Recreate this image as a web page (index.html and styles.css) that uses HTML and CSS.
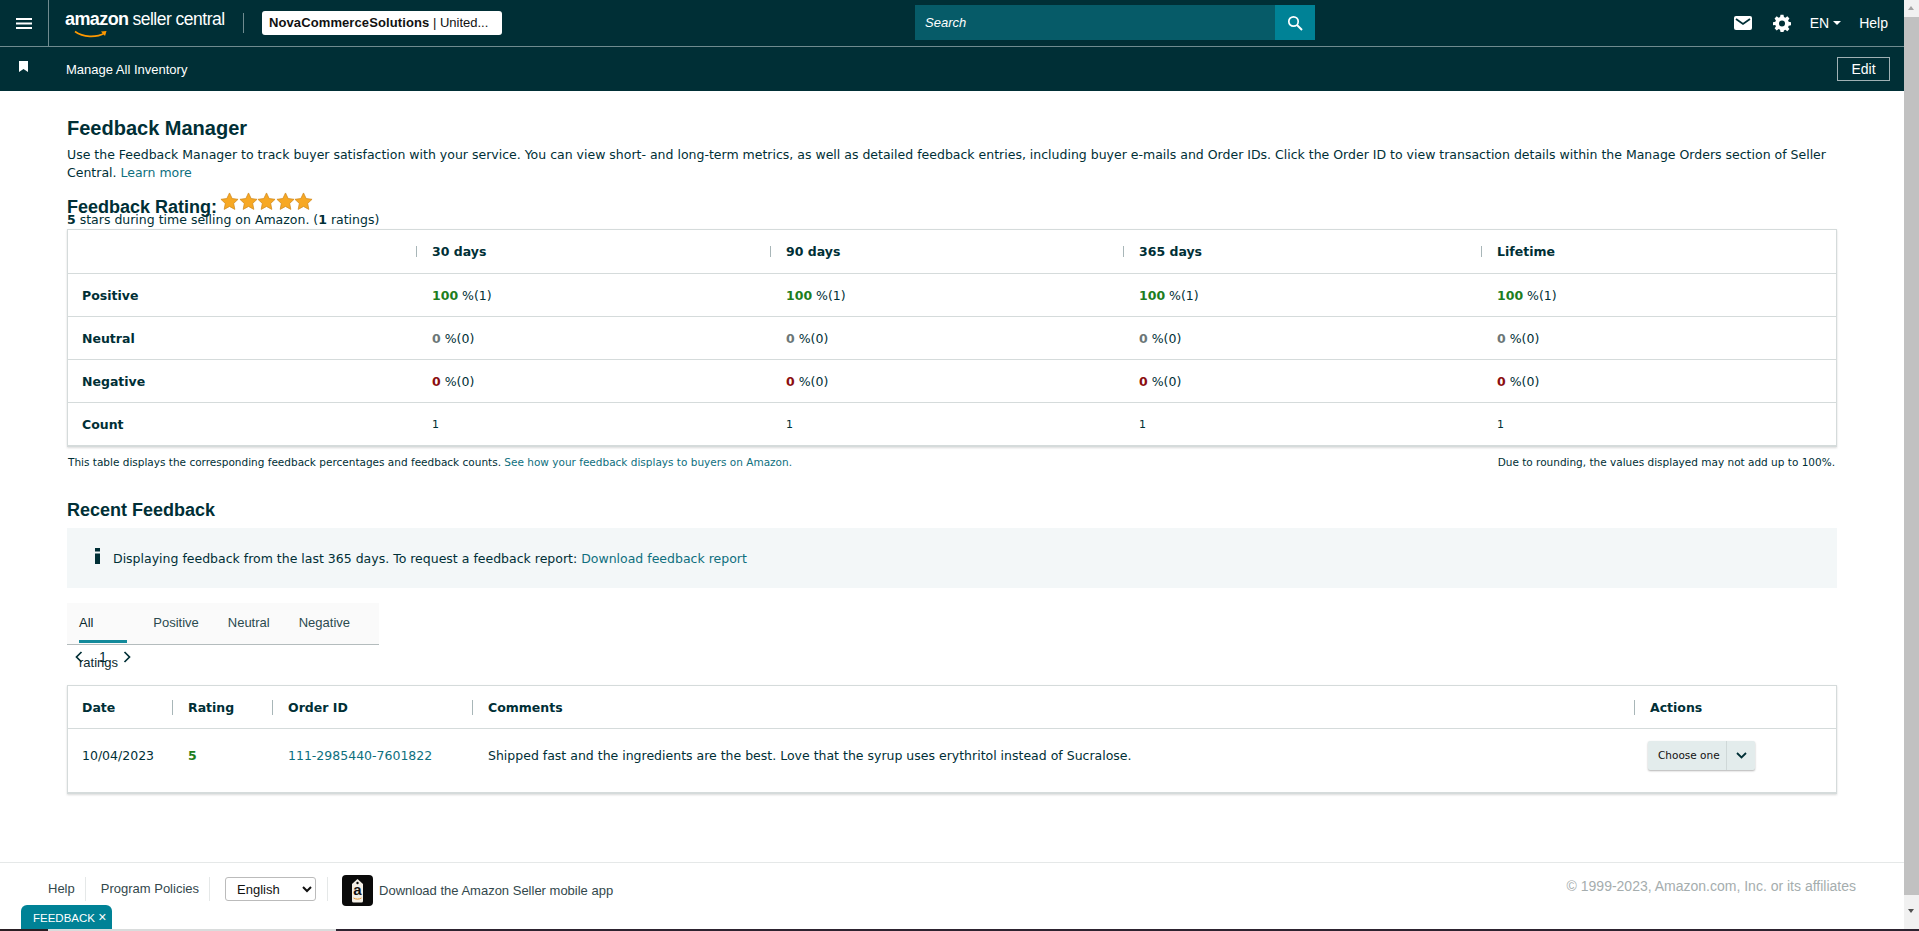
FILE: index.html
```html
<!DOCTYPE html>
<html lang="en">
<head>
<meta charset="utf-8">
<title>Feedback Manager</title>
<link rel="stylesheet" href="styles.css">
</head>
<body>
<div class="window">
  <div class="page">
    <header class="topbar">
      <button class="burger" aria-label="Menu">
        <svg width="16" height="11" viewBox="0 0 16 11"><path d="M0 0h16v2H0zM0 4.500h16v2H0zM0 9h16v2H0z" fill="#fff"/></svg>
      </button>
      <div class="logo">
        <span class="logo-amazon">amazon</span><span class="logo-seller">seller central</span>
        <svg class="logo-smile" width="34" height="9" viewBox="0 0 34 9"><path d="M1 1.500C9 7.500 22 8 31 3" fill="none" stroke="#f90" stroke-width="1.600"/><path d="M27 1.500l5.500-.5-1.500 5z" fill="#f90"/></svg>
      </div>
      <div class="account"><b>NovaCommerceSolutions</b> | United...</div>
      <div class="search">
        <span class="search-field">Search</span>
        <span class="search-btn">
          <svg width="16" height="16" viewBox="0 0 16 16"><circle cx="6.500" cy="6.500" r="4.700" fill="none" stroke="#fff" stroke-width="1.700"/><path d="M10 10l5 5" stroke="#fff" stroke-width="2"/></svg>
        </span>
      </div>
      <div class="top-actions">
        <svg class="mail" width="18" height="14" viewBox="0 0 18 14"><rect width="18" height="14" rx="2" fill="#fff"/><path d="M2 3l7 5 7-5" fill="none" stroke="#002f36" stroke-width="1.800"/></svg>
        <svg class="gear" width="18" height="18" viewBox="0 0 24 24"><path fill="#fff" fill-rule="evenodd" d="M10 1h4l.6 3.100 1.900.8L19.100 3.100 21.900 5.900 20.100 8.500l.8 1.900L24 11v4l-3.100.6-.8 1.900 1.800 2.600-2.800 2.800-2.600-1.800-1.900.8L14 24h-4l-.6-3.100-1.900-.8-2.600 1.800-2.800-2.800 1.800-2.600-.8-1.900L0 15v-4l3.100-.6.800-1.900L2.100 5.900 4.900 3.100 7.500 4.900l1.900-.8zM12 8.500a4 4 0 1 0 0 8 4 4 0 0 0 0-8z"/></svg>
        <span class="lang">EN<i class="caret"></i></span>
        <span class="help">Help</span>
      </div>
    </header>
    <nav class="subbar">
      <svg class="bookmark" width="9" height="11" viewBox="0 0 9 11"><path d="M0 0h9v11L4.500 8 0 11z" fill="#fff"/></svg>
      <span class="subbar-link">Manage All Inventory</span>
      <span class="edit">Edit</span>
    </nav>

    <main class="content">
      <h1 class="title">Feedback Manager</h1>
      <p class="intro">Use the Feedback Manager to track buyer satisfaction with your service. You can view short- and long-term metrics, as well as detailed feedback entries, including buyer e-mails and Order IDs. Click the Order ID to view transaction details within the Manage Orders section of Seller Central. <a class="link">Learn more</a></p>
      <div class="rating-head">
        <h2 class="rating-title">Feedback Rating:</h2>
        <div class="stars">
          <svg viewBox="0 0 20 20"><path class="star" d="M10 1l2.800 5.900 6.200.8-4.600 4.300 1.200 6.300L10 15.200l-5.600 3.100 1.200-6.300L1 7.700l6.200-.8z"/></svg>
          <svg viewBox="0 0 20 20"><path class="star" d="M10 1l2.800 5.900 6.200.8-4.600 4.300 1.200 6.300L10 15.200l-5.600 3.100 1.200-6.300L1 7.700l6.200-.8z"/></svg>
          <svg viewBox="0 0 20 20"><path class="star" d="M10 1l2.800 5.900 6.200.8-4.600 4.300 1.200 6.300L10 15.200l-5.600 3.100 1.200-6.300L1 7.700l6.200-.8z"/></svg>
          <svg viewBox="0 0 20 20"><path class="star" d="M10 1l2.800 5.900 6.200.8-4.600 4.300 1.200 6.300L10 15.200l-5.600 3.100 1.200-6.300L1 7.700l6.200-.8z"/></svg>
          <svg viewBox="0 0 20 20"><path class="star" d="M10 1l2.800 5.900 6.200.8-4.600 4.300 1.200 6.300L10 15.200l-5.600 3.100 1.200-6.300L1 7.700l6.200-.8z"/></svg>
        </div>
      </div>
      <p class="rating-sub"><b>5</b> stars during time selling on Amazon. (<b>1</b> ratings)</p>

      <section class="card metrics">
        <div class="row row-head">
          <div class="cell"></div>
          <div class="cell th">30 days</div>
          <div class="cell th">90 days</div>
          <div class="cell th">365 days</div>
          <div class="cell th">Lifetime</div>
        </div>
        <div class="row">
          <div class="cell label">Positive</div>
          <div class="cell val"><b class="pos">100</b> %(1)</div>
          <div class="cell val"><b class="pos">100</b> %(1)</div>
          <div class="cell val"><b class="pos">100</b> %(1)</div>
          <div class="cell val"><b class="pos">100</b> %(1)</div>
        </div>
        <div class="row">
          <div class="cell label">Neutral</div>
          <div class="cell val"><b class="neu">0</b> %(0)</div>
          <div class="cell val"><b class="neu">0</b> %(0)</div>
          <div class="cell val"><b class="neu">0</b> %(0)</div>
          <div class="cell val"><b class="neu">0</b> %(0)</div>
        </div>
        <div class="row">
          <div class="cell label">Negative</div>
          <div class="cell val"><b class="neg">0</b> %(0)</div>
          <div class="cell val"><b class="neg">0</b> %(0)</div>
          <div class="cell val"><b class="neg">0</b> %(0)</div>
          <div class="cell val"><b class="neg">0</b> %(0)</div>
        </div>
        <div class="row">
          <div class="cell label">Count</div>
          <div class="cell val small">1</div>
          <div class="cell val small">1</div>
          <div class="cell val small">1</div>
          <div class="cell val small">1</div>
        </div>
      </section>
      <div class="note">
        <span>This table displays the corresponding feedback percentages and feedback counts. <a class="link">See how your feedback displays to buyers on Amazon.</a></span>
        <span>Due to rounding, the values displayed may not add up to 100%.</span>
      </div>

      <h2 class="recent-title">Recent Feedback</h2>
      <div class="info">
        <svg class="info-i" width="5" height="16" viewBox="0 0 5 16"><path d="M0 0h5v3.500H0zM0 5.500h5V16H0z" fill="#002f36"/></svg>
        <span>Displaying feedback from the last 365 days. To request a feedback report: <a class="link">Download feedback report</a></span>
      </div>

      <div class="tabs">
        <span class="tab active">All ratings</span>
        <span class="tab">Positive</span>
        <span class="tab">Neutral</span>
        <span class="tab">Negative</span>
      </div>
      <div class="pager">
        <svg width="8" height="12" viewBox="0 0 8 12"><path d="M6.500 1L1.500 6l5 5" fill="none" stroke="#002f36" stroke-width="1.700"/></svg>
        <span>1</span>
        <svg width="8" height="12" viewBox="0 0 8 12"><path d="M1.500 1l5 5-5 5" fill="none" stroke="#002f36" stroke-width="1.700"/></svg>
      </div>

      <section class="card recent">
        <div class="rrow rrow-head">
          <div class="rcell first">Date</div>
          <div class="rcell th">Rating</div>
          <div class="rcell th">Order ID</div>
          <div class="rcell th">Comments</div>
          <div class="rcell th">Actions</div>
        </div>
        <div class="rrow rrow-body">
          <div class="rcell first plain">10/04/2023</div>
          <div class="rcell"><b class="pos">5</b></div>
          <div class="rcell"><a class="link">111-2985440-7601822</a></div>
          <div class="rcell">Shipped fast and the ingredients are the best. Love that the syrup uses erythritol instead of Sucralose.</div>
          <div class="rcell">
            <div class="choose"><span class="choose-label">Choose one</span><span class="choose-arrow"><svg width="11" height="7" viewBox="0 0 11 7"><path d="M1 1l4.500 4.500L10 1" fill="none" stroke="#002f36" stroke-width="1.800"/></svg></span></div>
          </div>
        </div>
      </section>
    </main>

    <footer class="footer">
      <span class="foot-link">Help</span>
      <span class="foot-link">Program Policies</span>
      <span class="foot-select">
        <select class="lang-select"><option>English</option></select>
      </span>
      <span class="foot-app">
        <svg class="app-icon" width="31" height="31" viewBox="0 0 31 31">
          <rect width="31" height="31" rx="4" fill="#0a0a0a"/>
          <path d="M10 9l5.500-5 5.500 5v17a1.500 1.500 0 0 1-1.500 1.500h-8A1.500 1.500 0 0 1 10 26z" fill="#f4efe6"/>
          <circle cx="15.500" cy="8" r="1.200" fill="#0a0a0a"/>
          <text x="15.500" y="20" class="app-a" text-anchor="middle">a</text>
          <path d="M11.500 23c2.500 1.500 5.500 1.500 8 0" fill="none" stroke="#e8962e" stroke-width="1"/>
        </svg>
        Download the Amazon Seller mobile app
      </span>
      <span class="copyright">© 1999-2023, Amazon.com, Inc. or its affiliates</span>
      <div class="feedback-tab">FEEDBACK <span class="feedback-x">×</span></div>
    </footer>
  </div>
  <div class="scrollbar">
    <span class="sb-arrow up"></span>
    <span class="sb-thumb"></span>
    <span class="sb-arrow down"></span>
  </div>
</div>
<div class="strip"><span class="s1"></span><span class="s2"></span><span class="s3"></span></div>
</body>
</html>
```

FILE: styles.css
```css
* { box-sizing: border-box; }
html, body { margin: 0; height: 100%; overflow: hidden; }
body {
  display: flex;
  flex-direction: column;
  height: 931px;
  font-family: "DejaVu Sans", Verdana, sans-serif;
  font-size: 12.500px;
  color: #002f36;
  background: #fff;
}
.window { display: flex; flex: 1; min-height: 0; }
.page { flex: 1; min-width: 0; display: flex; flex-direction: column; position: relative; }

/* top bars */
.topbar {
  height: 47px;
  flex: none;
  background: #002f36;
  border-bottom: 1px solid #6f8b8f;
  display: flex;
  align-items: center;
  position: relative;
  font-family: "Liberation Sans", Arial, sans-serif;
  color: #fff;
}
.burger {
  width: 49px; height: 46px; padding: 0 0 0 16px;
  background: none; border: 0; border-right: 1px solid #6f8b8f;
  display: flex; align-items: center; flex: none;
}
.logo {
  position: relative;
  margin-left: 16px;
  width: 179px;
  height: 20px;
  display: flex;
  align-items: baseline;
  border-right: 1px solid #6f8b8f;
  color: #fff;
  line-height: 20px;
  white-space: nowrap;
}
.logo-amazon { font-size: 18px; font-weight: 700; letter-spacing: -.6px; margin-top: -4px; }
.logo-seller { font-size: 17.500px; margin-left: 4px; letter-spacing: -.5px; font-weight: 400; margin-top: -4px; }
.logo-smile { position: absolute; left: 9px; top: 17px; }
.account {
  margin-left: 18px;
  width: 240px; height: 24px;
  background: #fff; color: #111;
  border-radius: 3px;
  font-size: 13px; line-height: 24px;
  padding-left: 7px;
  white-space: nowrap;
}
.account b { font-weight: 700; letter-spacing: .1px; }
.search {
  position: absolute; left: 915px; top: 5px;
  width: 400px; height: 35px;
  display: flex;
  background: #065b68;
}
.search-field { flex: 1; padding-left: 10px; line-height: 35px; font-size: 13px; font-style: italic; color: #fff; }
.search-btn { width: 40px; background: #008296; display: flex; align-items: center; justify-content: center; }
.top-actions { margin-left: auto; display: flex; align-items: center; padding-right: 16px; font-size: 14px; }
.mail { margin-right: 21px; }
.gear { margin-right: 19px; }
.lang { display: flex; align-items: center; margin-right: 18px; }
.caret { margin-left: 4px; border: 4px solid transparent; border-top: 4px solid #fff; border-bottom: 0; }

.subbar {
  height: 44px;
  flex: none;
  background: #002f36;
  color: #fff;
  display: flex;
  align-items: center;
  font-family: "Liberation Sans", Arial, sans-serif;
  font-size: 13px;
  padding: 0 14px 0 19px;
}
.bookmark { margin-top: -6px; }
.subbar-link { margin-left: 38px; }
.edit {
  margin-left: auto;
  width: 53px; height: 24px;
  border: 1px solid #9fb1b4;
  text-align: center;
  line-height: 22px;
  font-size: 14px;
  margin-top: -1px;
}

/* content */
.content { flex: none; padding: 0 67px; height: 771px; position: relative; }
.page .content { height: auto; flex: 1; padding-right: 67px; }
.title { margin: 26px 0 0; font: 700 20px/22px "Liberation Sans", Arial, sans-serif; }
.intro { margin: 7px 0 0; line-height: 18px; }
.link { color: #0e6f7e; }
.rating-head { display: flex; align-items: flex-start; margin-top: 7px; height: 26px; }
.rating-title { margin: 8px 0 0; font: 700 18px/20px "Liberation Sans", Arial, sans-serif; }
.stars { display: flex; margin-left: 3px; margin-top: 3px; }
.stars svg { width: 19px; height: 19px; margin-right: -.4px; }
.star { fill: #f7a823; stroke: #cf8a1e; stroke-width: .8; }
.rating-sub { margin: -3px 0 0; line-height: 16px; }
.rating-sub b, .row b, .rcell b { font-weight: 700; }

.card {
  background: #fff;
  border: 1px solid #d5dbdb;
  border-bottom-width: 2px;
  box-shadow: 0 1px 2px rgba(0,0,0,.15);
}
.metrics { margin-top: 1px; }
.row {
  display: grid;
  grid-template-columns: 348px 354px 353px 358px 1fr;
  height: 43px;
  border-top: 1px solid #d5dbdb;
  align-items: center;
}
.row-head { border-top: 0; height: 43px; }
.cell { padding-left: 16px; position: relative; }
.label { font-weight: 700; padding-left: 14px; }
.th { font-weight: 700; }
.th::before {
  content: "";
  position: absolute; left: 0; top: 2px; bottom: 2px;
  width: 1px; background: #a8b6b8;
}
.val { padding-left: 16px; }
.small { font-size: 11px; }
.pos { color: #1e7e1e; }
.neu { color: #6c7778; }
.neg { color: #8b0f0f; }

.note {
  display: flex; justify-content: space-between;
  font-size: 10.500px;
  line-height: 14px;
  padding: 8px 2px 0 1px;
}
.recent-title { margin: 30px 0 0; font: 700 18px/22px "Liberation Sans", Arial, sans-serif; }
.info {
  margin-top: 7px;
  height: 60px;
  background: #f3f7f8;
  display: flex;
  align-items: center;
  padding-left: 28px;
  gap: 13px;
}
.info-i { margin-top: -4px; }
.tabs {
  margin-top: 15px;
  width: 312px; height: 42px;
  background: #fafafa;
  border-bottom: 1px solid #b4bcbd;
  display: flex;
  padding-left: 12px;
  font: 13px "Liberation Sans", Arial, sans-serif;
  position: relative;
}
.tab { margin-right: 29px; height: 41px; line-height: 40px; color: #2b4a4f; }
.tab.active { color: #0b2a2f; position: relative; }
.tab.active::after {
  content: ""; position: absolute; left: 0; right: -3px; bottom: 1px; height: 3px; background: #138a9b;
}
.pager {
  display: flex; align-items: center;
  height: 24px;
  padding-left: 8px;
  font: 14px "Liberation Sans", Arial, sans-serif;
  gap: 16px;
  margin-top: 0;
}
.recent { margin-top: 16px; }
.rrow {
  display: grid;
  grid-template-columns: 104px 100px 200px 1162px 1fr;
  align-items: center;
}
.rrow-head { height: 43px; font-weight: 700; border-bottom: 1px solid #d5dbdb; }
.rrow-body { height: 63px; align-items: start; padding-top: 14px; }
.rcell { padding-left: 16px; position: relative; }
.rcell.first { padding-left: 14px; }
.rrow-body .rcell:not(:last-child) { padding-top: 5px; }
.rcell.th::before {
  content: "";
  position: absolute; left: 0; top: 0; bottom: 0;
  width: 1px; background: #a8b6b8;
}
.choose {
  display: flex;
  width: 107px; height: 29px;
  background: #e3ecec;
  border-radius: 2px;
  box-shadow: 0 1px 2px rgba(0,0,0,.3);
  font-size: 10.500px;
  margin-top: -2px;
  margin-left: -2px;
}
.choose-label { width: 79px; padding-left: 10px; line-height: 29px; border-right: 1px solid #cfd8d8; color: #111; }
.choose-arrow { flex: 1; display: flex; align-items: center; justify-content: center; }

/* footer */
.footer {
  flex: none;
  height: 67px;
  border-top: 1px solid #e5e8e8;
  display: flex;
  align-items: flex-start;
  padding-top: 14px;
  position: relative;
  font: 13px "Liberation Sans", Arial, sans-serif;
  color: #33484c;
  margin-bottom: 0;
}
.foot-link { height: 24px; line-height: 24px; }
.foot-link:nth-child(1) { margin-left: 48px; padding-right: 10px; border-right: 1px solid #e5e8e8; }
.foot-link:nth-child(2) { margin-left: 15px; padding-right: 10px; border-right: 1px solid #e5e8e8; }
.foot-select { margin-left: 15px; padding-right: 11px; border-right: 1px solid #e5e8e8; height: 24px; }
.lang-select {
  width: 91px; height: 24px;
  font: 13px "Liberation Sans", Arial, sans-serif;
  background: #fff;
  border: 1px solid #bbb; border-radius: 3px;
  padding-left: 7px;
  color: #111;
}
.foot-app { margin-left: 14px; display: flex; align-items: center; gap: 6px; margin-top: -2px; height: 31px; }
.app-a { font: 700 15px "Liberation Sans", Arial, sans-serif; fill: #111; }
.copyright { position: absolute; right: 48px; top: 15px; font-size: 14px; color: #a5adae; }
.feedback-tab {
  position: absolute; left: 21px; bottom: 0;
  width: 91px; height: 24px;
  background: #008296;
  color: #fff;
  border-radius: 6px 6px 0 0;
  font-size: 11.500px;
  line-height: 24px;
  padding-left: 12px;
}
.feedback-x { font-size: 14px; }

/* scrollbar & bottom strip */
.scrollbar {
  width: 15px; flex: none;
  background: #f1f1f1;
  display: flex; flex-direction: column; align-items: center;
}
.sb-thumb { flex: 1; width: 100%; background: #c1c1c1; }
.sb-arrow { height: 17px; flex: none; position: relative; width: 100%; }
.sb-arrow::after {
  content: ""; position: absolute; left: 4px; top: 6px;
  border: 3.500px solid transparent;
}
.sb-arrow.up::after { border-top: 0; border-bottom: 4px solid #a3a3a3; }
.sb-arrow.down { height: 34px; }
.sb-arrow.down::after { top: 14px; border-bottom: 0; border-top: 4px solid #505050; }
.strip { height: 2px; flex: none; display: flex; background: #2a1f24; }
.s1 { width: 48px; }
.s2 { width: 288px; background: #d9dcdc; }
.s3 { flex: 1; background: #2d2330; }
```
